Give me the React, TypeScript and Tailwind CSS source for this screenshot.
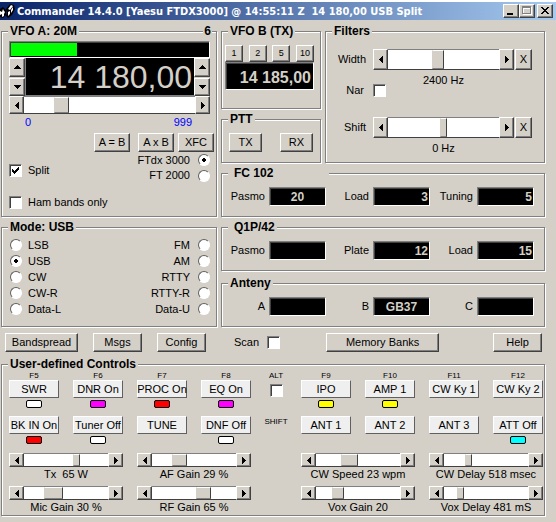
import React from 'react';

const raised =
  'border border-t-white border-l-white border-r-[#404040] border-b-[#404040] shadow-[inset_-1px_-1px_#808080] bg-[#d4d0c8]';
const sunken =
  'border border-t-[#808080] border-l-[#808080] border-r-white border-b-white shadow-[inset_1px_1px_#404040]';

interface GroupProps {
  title: string;
  className?: string;
  legendClass?: string;
  children: React.ReactNode;
}

const Group: React.FC<GroupProps> = ({ title, className = '', legendClass = 'px-0.5', children }) => (
  <fieldset
    className={`relative min-w-0 border border-[#808080] shadow-[1px_1px_#fff,inset_1px_1px_#fff] ${className}`}
  >
    <legend className={`ml-1.5 bg-[#d4d0c8] text-[12px] leading-4 font-bold whitespace-nowrap ${legendClass}`}>
      {title}
    </legend>
    {children}
  </fieldset>
);

interface PushProps {
  label: string;
  className?: string;
}

const Push: React.FC<PushProps> = ({ label, className = '' }) => (
  <button type="button" className={`flex items-center justify-center whitespace-nowrap ${raised} ${className}`}>
    {label}
  </button>
);

const arrows = {
  up: 'M0 4h7v-1h-1v-1h-1v-1h-1v-1h-1v1h-1v1h-1v1h-1z',
  down: 'M0 0h7v1h-1v1h-1v1h-1v1h-1v-1h-1v-1h-1v-1h-1z',
  left: 'M4 0v7h-1v-1h-1v-1h-1v-1h-1v-1h1v-1h1v-1h1v-1z',
  right: 'M0 0v7h1v-1h1v-1h1v-1h1v-1h-1v-1h-1v-1h-1v-1z',
};

interface ArrowProps {
  dir: keyof typeof arrows;
  label: string;
  className?: string;
}

const Arrow: React.FC<ArrowProps> = ({ dir, label, className = '' }) => {
  const upright = dir === 'up' || dir === 'down';
  return (
    <button
      type="button"
      aria-label={label}
      className={`flex shrink-0 items-center justify-center ${raised} ${className}`}
    >
      <svg width={upright ? 7 : 4} height={upright ? 4 : 7} shapeRendering="crispEdges">
        <path d={arrows[dir]} />
      </svg>
    </button>
  );
};

interface SliderProps {
  label: string;
  value: number;
  thumb: string;
  className?: string;
}

// thumb carries the full width class of the scroll box
const Slider: React.FC<SliderProps> = ({ label, value, thumb, className = 'h-[14px]' }) => (
  <div className={`flex min-w-0 ${className}`}>
    <Arrow dir="left" label={`${label} down`} className="w-[15px]" />
    <input
      type="range"
      aria-label={label}
      defaultValue={value}
      className={`h-full w-0 min-w-0 flex-1 appearance-none border-y border-t-[#808080] border-b-[#404040] bg-white [&::-webkit-slider-runnable-track]:h-full [&::-webkit-slider-thumb]:h-full [&::-webkit-slider-thumb]:appearance-none [&::-webkit-slider-thumb]:border [&::-webkit-slider-thumb]:border-t-white [&::-webkit-slider-thumb]:border-r-[#404040] [&::-webkit-slider-thumb]:border-b-[#808080] [&::-webkit-slider-thumb]:border-l-[#d4d0c8] [&::-webkit-slider-thumb]:bg-[#d4d0c8] ${thumb}`}
    />
    <Arrow dir="right" label={`${label} up`} className="w-[15px]" />
  </div>
);

interface TickProps {
  label: string;
  checked?: boolean;
}

const Tick: React.FC<TickProps> = ({ label, checked = false }) => (
  <span className="relative block h-[13px] w-[13px] shrink-0">
    <input
      type="checkbox"
      aria-label={label}
      defaultChecked={checked}
      className={`peer block h-[13px] w-[13px] appearance-none bg-white ${sunken}`}
    />
    <svg
      className="pointer-events-none absolute inset-0 hidden peer-checked:block"
      width="13"
      height="13"
      shapeRendering="crispEdges"
    >
      <path d="M3 5h1v1h1v1h1v-1h1v-1h1v-1h1v-1h1v3h-1v1h-1v1h-1v1h-1v1h-1v-1h-1v-1h-1z" />
    </svg>
  </span>
);

interface RadioProps {
  name: string;
  label: string;
  checked?: boolean;
  right?: boolean;
  className?: string;
}

const Radio: React.FC<RadioProps> = ({ name, label, checked = false, right = false, className = 'h-4' }) => (
  <label className={`flex items-center ${right ? 'flex-row-reverse gap-2' : 'gap-1.5'} ${className}`}>
    <input
      type="radio"
      name={name}
      defaultChecked={checked}
      className="h-3 w-3 shrink-0 appearance-none rounded-full border border-t-[#606060] border-r-white border-b-white border-l-[#606060] bg-white checked:bg-[radial-gradient(circle,#000_2px,#fff_2px)]"
    />
    {label}
  </label>
);

interface FieldProps {
  label: string;
  value: string;
  align?: string;
}

const Field: React.FC<FieldProps> = ({ label, value, align = 'text-right' }) => (
  <label className="flex min-w-0 flex-1 items-center justify-end gap-1">
    {label}
    <input
      type="text"
      defaultValue={value}
      className={`h-[19px] w-[57px] bg-black px-px pt-px text-[12px] font-bold text-[#d4d0c8] ${sunken} ${align}`}
    />
  </label>
);

const modesLeft = ['LSB', 'USB', 'CW', 'CW-R', 'Data-L'];
const modesRight = ['FM', 'AM', 'RTTY', 'RTTY-R', 'Data-U'];

interface KeyDef {
  fkey?: string;
  label: string;
  led?: string;
}

const keysLeft: KeyDef[] = [
  { fkey: 'F5', label: 'SWR', led: 'bg-white' },
  { fkey: 'F6', label: 'DNR On', led: 'bg-[#ff00ff]' },
  { fkey: 'F7', label: 'PROC On', led: 'bg-[#ff0000]' },
  { fkey: 'F8', label: 'EQ On', led: 'bg-[#ff00ff]' },
  { label: 'BK IN On', led: 'bg-[#ff0000]' },
  { label: 'Tuner Off', led: 'bg-white' },
  { label: 'TUNE' },
  { label: 'DNF Off', led: 'bg-white' },
];

const keysRight: KeyDef[] = [
  { fkey: 'F9', label: 'IPO', led: 'bg-[#ffff00]' },
  { fkey: 'F10', label: 'AMP 1', led: 'bg-[#ffff00]' },
  { fkey: 'F11', label: 'CW Ky 1' },
  { fkey: 'F12', label: 'CW Ky 2' },
  { label: 'ANT 1' },
  { label: 'ANT 2' },
  { label: 'ANT 3' },
  { label: 'ATT Off', led: 'bg-[#00ffff]' },
];

const slidersLeft = [
  { label: 'Tx  65 W', value: 64, thumb: '[&::-webkit-slider-thumb]:w-[7px]' },
  { label: 'AF Gain 29 %', value: 29, thumb: '[&::-webkit-slider-thumb]:w-[15px]' },
  { label: 'Mic Gain 30 %', value: 30, thumb: '[&::-webkit-slider-thumb]:w-[19px]' },
  { label: 'RF Gain 65 %', value: 64, thumb: '[&::-webkit-slider-thumb]:w-[15px]' },
];

const slidersRight = [
  { label: 'CW Speed 23 wpm', value: 38, thumb: '[&::-webkit-slider-thumb]:w-[17px]' },
  { label: 'CW Delay 518 msec', value: 27, thumb: '[&::-webkit-slider-thumb]:w-[7px]' },
  { label: 'Vox Gain 20', value: 22, thumb: '[&::-webkit-slider-thumb]:w-[12px]' },
  { label: 'Vox Delay 481 mS', value: 17, thumb: '[&::-webkit-slider-thumb]:w-[7px]' },
];

interface BankProps {
  keys: KeyDef[];
  sliders: typeof slidersLeft;
}

const Bank: React.FC<BankProps> = ({ keys, sliders }) => (
  <div className="min-w-0 flex-1">
    <div className="grid grid-cols-4 gap-x-3.5 gap-y-2">
      {keys.map((key) => (
        <div key={key.label} className="flex min-w-0 flex-col items-center">
          {key.fkey && <span className="text-[8px] leading-2">{key.fkey}</span>}
          <button
            type="button"
            className="flex h-[18px] w-full items-center justify-center border border-t-white border-r-[#606060] border-b-[#606060] border-l-white bg-[#efefef] whitespace-nowrap"
          >
            {key.label}
          </button>
          <span className={`mt-0.5 h-2 w-4 rounded-[2px] ${key.led ? `border border-black ${key.led}` : ''}`} />
        </div>
      ))}
    </div>
    <div className="mt-[9px] grid grid-cols-2 gap-x-3.5 gap-y-1">
      {sliders.map((s) => (
        <div key={s.label} className="min-w-0">
          <Slider label={s.label} value={s.value} thumb={s.thumb} />
          <p className="text-center leading-[15px] whitespace-pre">{s.label}</p>
        </div>
      ))}
    </div>
  </div>
);

const TitleBar: React.FC = () => (
  <header className="mt-0.5 flex h-[18px] items-center bg-linear-to-r/srgb from-[#0a246a] to-[#a6caf0] pr-[3px]">
    <svg width="16" height="16" className="shrink-0">
      <path d="M0 6l3-2 3 3v5l-3 3-3-1z" fill="#000" />
      <path d="M6 6l4-5 4 1 1 4-3 6-4 3-2-2 1-3z" fill="#000" />
      <path d="M0 8l2 1 1-3 1 2 1 1-1 2v2l-2 1v-3l-2 1z" fill="#fff" />
      <path d="M8 6l3-4 2 1-3 4zM11 7l2-3v3l-2 3zM8 9l2-1v3l-2 2z" fill="#fff" />
    </svg>
    <h1 className="ml-px flex-1 overflow-hidden font-['DejaVu_Sans_Condensed','DejaVu_Sans',sans-serif] text-[11px] font-bold whitespace-pre text-white">
      Commander 14.4.0 [Yaesu FTDX3000] @ 14:55:11 Z  14 180,00 USB Split
    </h1>
    <button type="button" aria-label="Minimize" className={`h-[14px] w-4 ${raised}`}>
      <svg width="14" height="12" shapeRendering="crispEdges">
        <path d="M3 8h6v2h-6z" />
      </svg>
    </button>
    <button type="button" aria-label="Maximize" className={`h-[14px] w-4 ${raised}`}>
      <svg width="14" height="12" shapeRendering="crispEdges">
        <path d="M3.500 2.500h8v7h-8zM3 3.500h9" fill="none" stroke="#fff" />
        <path d="M2.500 1.500h8v7h-8zM2 2.500h9" fill="none" stroke="#808080" />
      </svg>
    </button>
    <button type="button" aria-label="Close" className={`ml-0.5 h-[14px] w-4 ${raised}`}>
      <svg width="14" height="12" shapeRendering="crispEdges">
        <path d="M3 2h2v1h1v1h2v-1h1v-1h2v1h-1v1h-1v1h-1v1h1v1h1v1h1v1h-2v-1h-1v-1h-2v1h-1v1h-2v-1h1v-1h1v-1h1v-1h-1v-1h-1v-1h-1z" />
      </svg>
    </button>
  </header>
);

const VfoA: React.FC = () => (
  <Group title="VFO A: 20M">
    <span className="absolute -top-4 right-1 bg-[#d4d0c8] px-px text-[12px] leading-4 font-bold">6</span>
    <div className="pt-0.5 pr-1.5 pl-[7px]">
      <div className={`h-[17px] bg-black p-px ${sunken}`}>
        <div className="h-full w-1/3 bg-[#00ff00]" />
      </div>
      <div className="flex h-[38px]">
        <div className="flex w-4 flex-col gap-px">
          <Arrow dir="up" label="Frequency up" className="flex-1" />
          <Arrow dir="down" label="Frequency down" className="flex-1" />
        </div>
        <output className="flex flex-1 items-center justify-end border-b border-l border-[#808080] bg-black pt-0.5 pr-0.5 text-[32px] whitespace-nowrap text-[#d4d0c8]">
          14 180,00
        </output>
        <div className="flex w-4 flex-col gap-px">
          <Arrow dir="up" label="Step up" className="flex-1" />
          <Arrow dir="down" label="Step down" className="flex-1" />
        </div>
      </div>
      <Slider label="Tune" value={19} thumb="[&::-webkit-slider-thumb]:w-[15px]" className="h-[18px]" />
      <div className="flex justify-between pr-[18px] pl-4 text-[#0000ff]">
        <span className="leading-4">0</span>
        <span className="leading-4">999</span>
      </div>
    </div>
    <div className="mt-[3px] flex justify-end pr-0.5">
      <Push label="A = B" className="h-[19px] w-9" />
      <Push label="A x B" className="ml-2 h-[19px] w-9" />
      <Push label="XFC" className="ml-1 h-[19px] w-9" />
    </div>
    <div className="flex h-16 justify-between pr-1.5 pl-[7px]">
      <div className="flex flex-col justify-between pt-3 pb-[7px]">
        <label className="flex items-center gap-1.5">
          <Tick label="Split" checked />
          Split
        </label>
        <label className="flex items-center gap-1.5">
          <Tick label="Ham bands only" />
          Ham bands only
        </label>
      </div>
      <div>
        <Radio name="rig" label="FTdx 3000" checked right />
        <Radio name="rig" label="FT 2000" right className="h-[15px]" />
      </div>
    </div>
  </Group>
);

const Mode: React.FC = () => (
  <Group title="Mode: USB" className="flex-1">
    <div className="flex justify-between pt-0.5 pr-1.5 pl-2">
      <div>
        {modesLeft.map((m) => (
          <Radio key={m} name="mode" label={m} checked={m === 'USB'} />
        ))}
      </div>
      <div>
        {modesRight.map((m) => (
          <Radio key={m} name="mode" label={m} right />
        ))}
      </div>
    </div>
  </Group>
);

const Filters: React.FC = () => (
  <Group title="Filters" className="flex-1">
    <div className="grid grid-cols-[40px_1fr_18px] items-center pt-2.5 pr-3">
      <span className="text-right">Width</span>
      <Slider
        label="Width"
        value={44}
        thumb="[&::-webkit-slider-thumb]:w-[12px]"
        className="ml-[7px] h-[21px]"
      />
      <Push label="X" className="ml-px h-[21px]" />
      <p className="col-start-2 ml-[7px] pt-1 text-center leading-3">2400 Hz</p>
      <label htmlFor="nar" className="col-start-1 -mt-0.5 pr-0.5 text-right">
        Nar
      </label>
      <input
        id="nar"
        type="checkbox"
        className={`-mt-0.5 ml-[7px] block h-[13px] w-[13px] appearance-none bg-white ${sunken}`}
      />
      <span className="col-start-1 mt-5 text-right">Shift</span>
      <Slider
        label="Shift"
        value={50}
        thumb="[&::-webkit-slider-thumb]:w-[7px]"
        className="mt-5 ml-[7px] h-[21px]"
      />
      <Push label="X" className="mt-5 ml-px h-[21px]" />
      <p className="col-start-2 ml-[7px] pt-1 text-center leading-3">0 Hz</p>
    </div>
  </Group>
);

export default function App() {
  return (
    <main className="bg-[#d4d0c8] pb-1.5 font-['Liberation_Sans',Arial,sans-serif] text-[11px] leading-[13px] text-black">
      <TitleBar />
      <div className="flex gap-1 pt-[3px] pr-[11px] pl-px">
        <div className="flex w-[216px] shrink-0 flex-col gap-0.5">
          <VfoA />
          <Mode />
        </div>

        <div className="flex min-w-0 flex-1 flex-col gap-0.5">
          <div className="flex gap-1">
            <div className="flex w-[100px] shrink-0 flex-col gap-0.5">
              <Group title="VFO B (TX)" className="h-[86px]">
                <div className="pt-1.5 pr-1.5 pl-[3px]">
                  <div className="flex justify-between text-[9px]">
                    <Push label="1" className="h-[17px] w-[18px]" />
                    <Push label="2" className="h-[17px] w-[18px]" />
                    <Push label="5" className="h-[17px] w-[18px]" />
                    <Push label="10" className="h-[17px] w-[18px]" />
                  </div>
                  <output
                    className={`flex h-7 items-center justify-end bg-black pt-0.5 pr-0.5 text-[16px] font-bold whitespace-nowrap text-[#d4d0c8] ${sunken}`}
                  >
                    14 185,00
                  </output>
                </div>
              </Group>
              <Group title="PTT" className="h-[52px]">
                <div className="flex justify-between px-[7px] pt-1.5">
                  <Push label="TX" className="h-[19px] w-[33px]" />
                  <Push label="RX" className="h-[19px] w-[33px]" />
                </div>
              </Group>
            </div>

            <Filters />
          </div>

          <Group title="FC 102" legendClass="w-[101px] pl-1.5" className="h-[52px]">
            <div className="flex pt-1.5 pr-2.5">
              <Field label="Pasmo" value="20" align="text-center" />
              <Field label="Load" value="3" />
              <Field label="Tuning" value="5" />
            </div>
          </Group>
          <div className="flex flex-col gap-1">
            <Group title="Q1P/42" legendClass="pl-1.5 pr-0.5" className="h-[52px]">
              <div className="flex pt-1.5 pr-2.5">
                <Field label="Pasmo" value="" />
                <Field label="Plate" value="12" />
                <Field label="Load" value="15" />
              </div>
            </Group>
            <Group title="Anteny" className="h-[52px]">
              <div className="flex pt-1.5 pr-2.5">
                <Field label="A" value="" />
                <Field label="B" value="GB37" align="text-center" />
                <Field label="C" value="" />
              </div>
            </Group>
          </div>
        </div>
      </div>

      <div className="flex items-center pt-1.5 pr-3.5 pl-[5px]">
        <Push label="Bandspread" className="h-[19px] w-[73px]" />
        <Push label="Msgs" className="ml-[15px] h-[19px] w-[49px]" />
        <Push label="Config" className="ml-[15px] h-[19px] w-[49px]" />
        <label className="ml-7 flex items-center gap-2">
          Scan
          <Tick label="Scan" />
        </label>
        <Push label="Memory Banks" className="ml-[46px] h-[19px] w-[113px]" />
        <Push label="Help" className="ml-auto h-[19px] w-[49px]" />
      </div>

      <div className="pt-1 pr-[11px] pl-px">
        <Group title="User-defined Controls">
          <div className="flex pr-px pl-[7px]">
            <Bank keys={keysLeft} sliders={slidersLeft} />
            <div className="flex w-[50px] shrink-0 flex-col items-center text-[8px] leading-2">
              <label htmlFor="alt">ALT</label>
              <input
                id="alt"
                type="checkbox"
                className={`mt-1 block h-[13px] w-[13px] appearance-none bg-white ${sunken}`}
              />
              <span className="mt-[21px]">SHIFT</span>
            </div>
            <Bank keys={keysRight} sliders={slidersRight} />
          </div>
        </Group>
      </div>
    </main>
  );
}
